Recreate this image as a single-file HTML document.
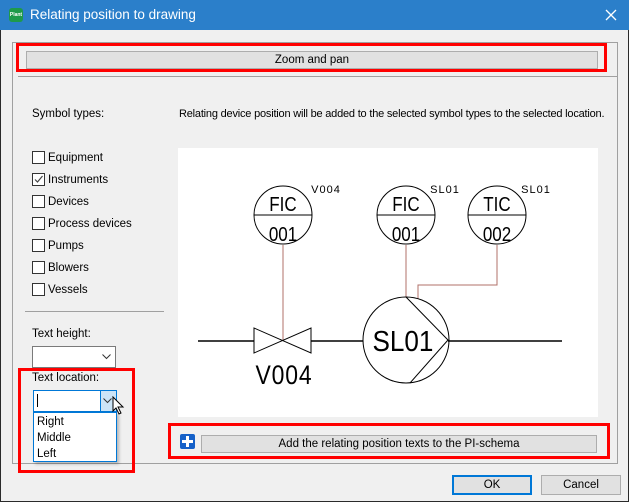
<!DOCTYPE html>
<html><head><style>
*{box-sizing:border-box;margin:0;padding:0}
body{width:629px;height:502px;position:relative;background:#f0f0f0;font-family:"Liberation Sans",sans-serif;font-size:11.5px;color:#000;overflow:hidden}
.a{position:absolute;white-space:nowrap}
.btn{position:absolute;background:#e1e1e1;border:1px solid #adadad;text-align:center;line-height:16px}
.red{position:absolute;border:3px solid #f00}
.cb{position:absolute;left:32px;width:13px;height:13px;border:1px solid #333;background:#fff}
.lb{position:absolute;left:48px}
</style></head><body>
<div class="a" style="left:0;top:0;width:629px;height:502px;border:1px solid #2a2a2a"></div>
<div class="a" style="left:0;top:0;width:629px;height:30px;background:#2b7fca"></div>
<div class="a" style="left:9px;top:8px;width:14px;height:14px;background:#1e9a4a;border-radius:3px;color:#fff;font-size:5px;font-weight:bold;line-height:14px;text-align:center">Plant</div>
<div class="a" style="left:30px;top:7px;color:#fff;font-size:13.5px">Relating position to drawing</div>
<svg class="a" style="left:605px;top:9px" width="12" height="12"><path d="M1 1 L11 11 M11 1 L1 11" stroke="#fff" stroke-width="1.3"/></svg>

<div class="a" style="left:12px;top:42px;width:606px;height:422px;border:1px solid #a0a0a0"></div>
<div class="red" style="left:16px;top:43px;width:591px;height:29px"></div>
<div class="btn" style="left:26px;top:51px;width:572px;height:18px">Zoom and pan</div>
<div class="a" style="left:18px;top:76px;width:599px;height:1px;background:#a0a0a0"></div>

<div class="a" style="left:32px;top:108px">Symbol types:</div>
<div class="a" style="left:179px;top:108px;font-size:11px;letter-spacing:-0.2px">Relating device position will be added to the selected symbol types to the selected location.</div>

<div class="cb" style="top:151px"></div><div class="lb" style="top:152px">Equipment</div>
<div class="cb" style="top:173px"><svg width="11" height="11" style="position:absolute;left:0;top:0"><path d="M2 5.5 L4.5 8 L9.5 2" stroke="#444" fill="none" stroke-width="1.2"/></svg></div><div class="lb" style="top:174px">Instruments</div>
<div class="cb" style="top:195px"></div><div class="lb" style="top:196px">Devices</div>
<div class="cb" style="top:217px"></div><div class="lb" style="top:218px">Process devices</div>
<div class="cb" style="top:239px"></div><div class="lb" style="top:240px">Pumps</div>
<div class="cb" style="top:261px"></div><div class="lb" style="top:262px">Blowers</div>
<div class="cb" style="top:283px"></div><div class="lb" style="top:284px">Vessels</div>
<div class="a" style="left:25px;top:311px;width:139px;height:1px;background:#a0a0a0"></div>

<div class="a" style="left:32px;top:328px">Text height:</div>
<div class="a" style="left:32px;top:346px;width:84px;height:22px;border:1px solid #7a7a7a;background:#fff"></div>
<svg class="a" style="left:102px;top:354px" width="9" height="6"><path d="M0.5 0.5 L4.5 4.5 L8.5 0.5" stroke="#333" fill="none"/></svg>
<div class="a" style="left:32px;top:372px">Text location:</div>
<div class="a" style="left:33px;top:390px;width:84px;height:22px;border:1px solid #0078d7;background:#fff"></div>
<div class="a" style="left:100px;top:391px;width:16px;height:20px;background:#cce4f7;border-left:1px solid #0078d7"></div>
<svg class="a" style="left:103px;top:398px" width="9" height="6"><path d="M0.5 0.5 L4.5 4.5 L8.5 0.5" stroke="#333" fill="none"/></svg>
<div class="a" style="left:37px;top:394px;width:1px;height:13px;background:#000"></div>
<svg class="a" style="left:112px;top:396px" width="14" height="20"><path d="M1 1 L1 15 L4 12 L7 18 L9 17 L6 11 L11 11 Z" fill="#fff" stroke="#000"/></svg>
<div class="a" style="left:33px;top:412px;width:84px;height:50px;border:1px solid #0078d7;background:#fff;box-shadow:2px 2px 3px rgba(0,0,0,.25)"></div>
<div class="a" style="left:37px;top:416px">Right</div>
<div class="a" style="left:37px;top:432px">Middle</div>
<div class="a" style="left:37px;top:448px">Left</div>
<div class="red" style="left:18px;top:368px;width:117px;height:105px"></div>

<svg class="a" style="left:178px;top:148px" width="420" height="269" viewBox="178 148 420 269">
<rect x="178" y="148" width="420" height="269" fill="#fff"/>
<g stroke="#b0706a" fill="none" stroke-width="1">
<line x1="283" y1="245" x2="283" y2="340"/>
<line x1="406" y1="245" x2="406" y2="297"/>
<polyline points="497,245 497,285 418,285 418,299"/>
</g>
<g stroke="#000" fill="none" stroke-width="1">
<circle cx="283" cy="215" r="29" fill="#fff"/><line x1="254" y1="215" x2="312" y2="215"/>
<circle cx="406" cy="215" r="29" fill="#fff"/><line x1="377" y1="215" x2="435" y2="215"/>
<circle cx="497" cy="215" r="29" fill="#fff"/><line x1="468" y1="215" x2="526" y2="215"/>
<line x1="198" y1="341" x2="254" y2="341" stroke-width="1.5"/>
<path d="M254 328 L254 353 L311 328 L311 353 Z"/>
<line x1="311" y1="341" x2="363" y2="341" stroke-width="1.5"/>
<circle cx="406" cy="340" r="43"/>
<path d="M406 297 L448 340 L410 383"/>
<line x1="448" y1="341" x2="562" y2="341" stroke-width="1.5"/>
</g>
<g font-family="Liberation Sans,sans-serif" fill="#000" text-anchor="middle">
<text x="283" y="211" font-size="20" transform="translate(283 0) scale(0.85 1) translate(-283 0)">FIC</text><text x="283" y="241" font-size="20" transform="translate(283 0) scale(0.85 1) translate(-283 0)">001</text>
<text x="406" y="211" font-size="20" transform="translate(406 0) scale(0.85 1) translate(-406 0)">FIC</text><text x="406" y="241" font-size="20" transform="translate(406 0) scale(0.85 1) translate(-406 0)">001</text>
<text x="497" y="211" font-size="20" transform="translate(497 0) scale(0.85 1) translate(-497 0)">TIC</text><text x="497" y="241" font-size="20" transform="translate(497 0) scale(0.85 1) translate(-497 0)">002</text>
<text x="326" y="193" font-size="11" letter-spacing="1">V004</text>
<text x="445" y="193" font-size="11" letter-spacing="1">SL01</text>
<text x="536" y="193" font-size="11" letter-spacing="1">SL01</text>
<text x="284" y="384" font-size="27" letter-spacing="1" transform="translate(284 0) scale(0.85 1) translate(-284 0)">V004</text>
<text x="403" y="351" font-size="29" transform="translate(403 0) scale(0.9 1) translate(-403 0)">SL01</text>
</g>
</svg>

<div class="red" style="left:168px;top:423px;width:442px;height:36px"></div>
<div class="a" style="left:180px;top:434px;width:15px;height:15px;background:#1560c8;border-radius:2px"></div>
<div class="a" style="left:186px;top:436px;width:3px;height:11px;background:#fff"></div>
<div class="a" style="left:182px;top:440px;width:11px;height:3px;background:#fff"></div>
<div class="btn" style="left:201px;top:435px;width:396px;height:18px">Add the relating position texts to the PI-schema</div>

<div class="btn" style="left:452px;top:475px;width:80px;height:20px;border:2px solid #0078d7;line-height:16px">OK</div>
<div class="btn" style="left:541px;top:475px;width:80px;height:20px;line-height:18px">Cancel</div>
</body></html>
